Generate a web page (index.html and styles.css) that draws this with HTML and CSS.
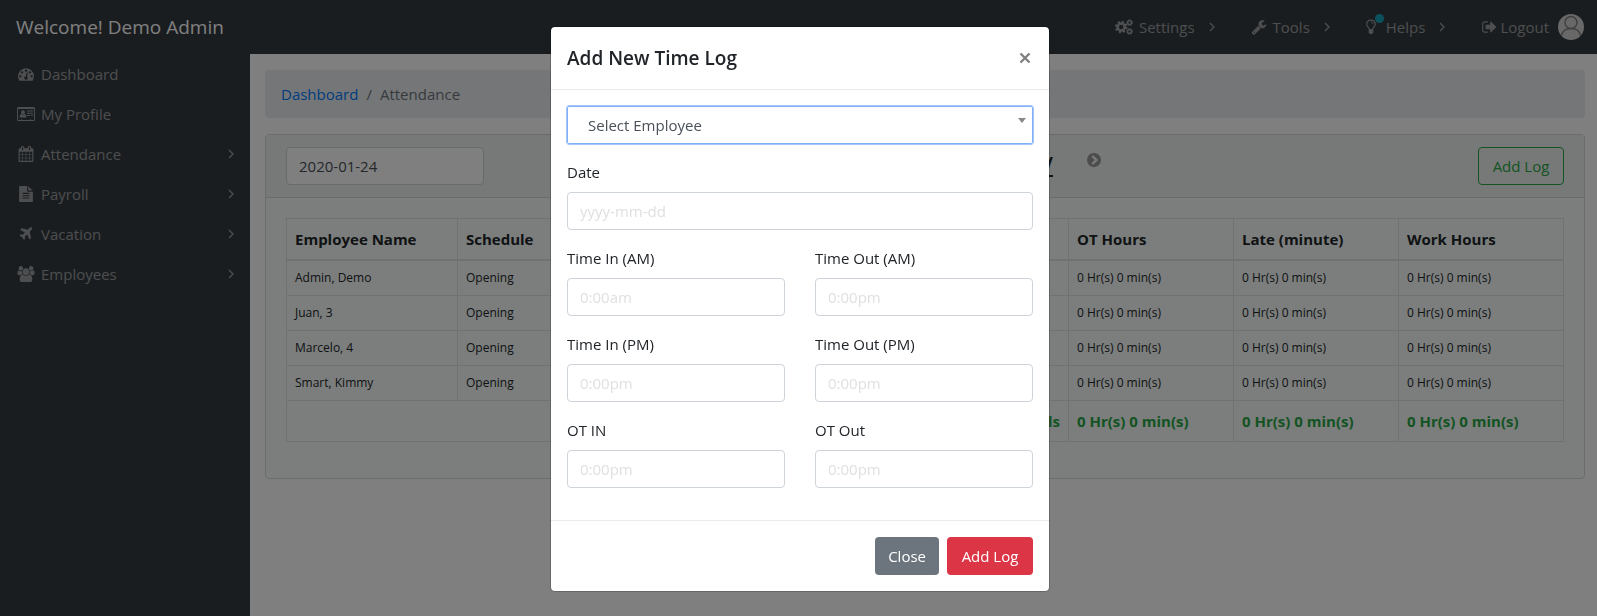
FILE: index.html
```html
<!DOCTYPE html>
<html lang="en">
<head>
<meta charset="utf-8">
<meta name="viewport" content="width=device-width, initial-scale=1">
<title>Attendance</title>
<link rel="stylesheet" href="styles.css">
</head>
<body>
<svg class="sprite" aria-hidden="true">
  <symbol id="i-angle" viewBox="0 0 6 10"><path d="M1 1l4 4-4 4" fill="none" stroke="currentColor" stroke-width="1.3"/></symbol>
  <symbol id="i-dash" viewBox="0 0 1792 1792"><path d="M384 1152q0-53-37.5-90.5t-90.5-37.5-90.5 37.5-37.5 90.5 37.5 90.5 90.5 37.5 90.5-37.5 37.5-90.5zm192-448q0-53-37.5-90.5t-90.5-37.5-90.5 37.5-37.5 90.5 37.5 90.5 90.5 37.5 90.5-37.5 37.5-90.5zm428 481l101-382q6-26-7.5-48.5t-38.5-29.5-48 6.5-30 39.5l-101 382q-60 5-107 43.5t-63 98.5q-20 77 20 146t117 89 146-20 89-117q16-60-6-117t-72-91zm660-33q0-53-37.5-90.5t-90.5-37.5-90.5 37.5-37.5 90.5 37.5 90.5 90.5 37.5 90.5-37.5 37.5-90.5zm-640-640q0-53-37.5-90.5t-90.5-37.5-90.5 37.5-37.5 90.5 37.5 90.5 90.5 37.5 90.5-37.5 37.5-90.5zm448 192q0-53-37.5-90.5t-90.5-37.5-90.5 37.5-37.5 90.5 37.5 90.5 90.5 37.5 90.5-37.5 37.5-90.5zm320 448q0 261-141 483-19 29-54 29h-1402q-35 0-54-29-141-221-141-483 0-182 71-348t191-286 286-191 348-71 348 71 286 191 191 286 71 348z"/></symbol>
  <symbol id="i-card" viewBox="0 0 18 14"><path fill-rule="evenodd" d="M1.5 0h15A1.5 1.5 0 0 1 18 1.500v11a1.500 1.500 0 0 1-1.500 1.500h-15A1.500 1.500 0 0 1 0 12.500v-11A1.500 1.500 0 0 1 1.500 0zM1 2v10.500c0 .3.200.5.500.5H4v-.8h1V13h8v-.8h1v.8h2.500c.3 0 .5-.2.500-.5V2z"/><circle cx="6" cy="5.300" r="2"/><path d="M2.600 10.500c0-2 .6-3.500 1.900-3.500.9.700 2.100.700 3 0 1.300 0 1.900 1.500 1.900 3.500z"/><path d="M10 3.500h6v1h-6zM10 5.700h6v1h-6zM10 7.900h3v1h-3zM14 7.900h2v1h-2z"/></symbol>
  <symbol id="i-cal" viewBox="0 0 1792 1792"><path d="M192 1664h288v-288h-288v288zm352 0h320v-288h-320v288zm-352-352h288v-320h-288v320zm352 0h320v-320h-320v320zm-352-384h288v-288h-288v288zm736 736h320v-288h-320v288zm-384-736h320v-288h-320v288zm768 736h288v-288h-288v288zm-384-352h320v-320h-320v320zm-352-864v-288q0-13-9.500-22.500t-22.500-9.500h-64q-13 0-22.500 9.500t-9.500 22.500v288q0 13 9.500 22.500t22.500 9.500h64q13 0 22.500-9.500t9.500-22.500zm736 864h288v-320h-288v320zm-384-384h320v-288h-320v288zm384 0h288v-288h-288v288zm32-480v-288q0-13-9.500-22.500t-22.500-9.500h-64q-13 0-22.500 9.500t-9.500 22.500v288q0 13 9.500 22.500t22.500 9.500h64q13 0 22.500-9.500t9.500-22.500zm384-64v1280q0 52-38 90t-90 38h-1408q-52 0-90-38t-38-90v-1280q0-52 38-90t90-38h128v-96q0-66 47-113t113-47h64q66 0 113 47t47 113v96h384v-96q0-66 47-113t113-47h64q66 0 113 47t47 113v96h128q52 0 90 38t38 90z"/></symbol>
  <symbol id="i-file" viewBox="0 0 1792 1792"><path d="M1596 476q14 14 28 36h-472v-472q22 14 36 28zm-476 164h544v1056q0 40-28 68t-68 28h-1344q-40 0-68-28t-28-68v-1600q0-40 28-68t68-28h800v544q0 40 28 68t68 28zm160 736v-64q0-14-9-23t-23-9h-704q-14 0-23 9t-9 23v64q0 14 9 23t23 9h704q14 0 23-9t9-23zm0-256v-64q0-14-9-23t-23-9h-704q-14 0-23 9t-9 23v64q0 14 9 23t23 9h704q14 0 23-9t9-23zm0-256v-64q0-14-9-23t-23-9h-704q-14 0-23 9t-9 23v64q0 14 9 23t23 9h704q14 0 23-9t9-23z"/></symbol>
  <symbol id="i-plane" viewBox="0 0 1792 1792"><path d="M1568 160q44 52 12 148t-108 172l-161 161 160 696q5 19-12 33l-128 96q-7 6-19 6-4 0-7-1-15-3-21-16l-279-508-259 259 53 194q5 17-8 31l-96 96q-9 9-23 9h-2q-15-2-24-13l-189-252-252-189q-11-7-13-23-1-13 9-25l96-97q9-9 23-9 6 0 8 1l194 53 259-259-508-279q-14-8-17-24-2-16 9-27l128-128q14-13 30-8l665 159 160-160q76-76 172-108t148 12z"/></symbol>
  <symbol id="i-users" viewBox="0 0 1920 1792"><path d="M593 896q-162 5-265 128h-134q-82 0-138-40.500t-56-118.500q0-353 124-353 6 0 43.500 21t97.500 42.500 119 21.500q67 0 133-23-5 37-5 66 0 159 93 293zm1071 637q0 120-73 189.500t-194 69.500h-874q-121 0-194-69.500t-73-189.500q0-53 3.500-103.500t14-109 26.500-108.500 43-97.500 62-81 85.500-53.500 111.500-20q10 0 43 21.500t73 48 107 48 135 21.500 135-21.500 107-48 73-48 43-21.500q61 0 111.500 20t85.500 53.500 62 81 43 97.500 26.500 108.500 14 109 3.500 103.500zm-1024-1277q0 106-75 181t-181 75-181-75-75-181 75-181 181-75 181 75 75 181zm704 384q0 159-112.500 271.500t-271.500 112.500-271.500-112.500-112.500-271.500 112.500-271.500 271.500-112.500 271.500 112.500 112.500 271.500zm576 225q0 78-56 118.500t-138 40.500h-134q-103-123-265-128 93-134 93-293 0-29-5-66 66 23 133 23 59 0 119-21.500t97.500-42.500 43.500-21q124 0 124 353zm-128-609q0 106-75 181t-181 75-181-75-75-181 75-181 181-75 181 75 75 181z"/></symbol>
  <symbol id="i-cogs" viewBox="0 0 18 16"><g fill="none" stroke="currentColor"><circle cx="6.200" cy="8" r="3.500" stroke-width="2.600"/><circle cx="6.200" cy="8" r="5.400" stroke-width="1.800" stroke-dasharray="2.120 2.120"/><circle cx="14.600" cy="3.600" r="1.900" stroke-width="1.400"/><circle cx="14.600" cy="3.600" r="2.900" stroke-width="1" stroke-dasharray="1.140 1.140"/><circle cx="14.600" cy="12.400" r="1.900" stroke-width="1.400"/><circle cx="14.600" cy="12.400" r="2.900" stroke-width="1" stroke-dasharray="1.140 1.140"/></g></symbol>
  <symbol id="i-wrench" viewBox="0 0 1792 1792"><path d="M448 1472q0-26-19-45t-45-19-45 19-19 45 19 45 45 19 45-19 19-45zm644-420l-682 682q-37 37-90 37-52 0-91-37l-106-108q-38-36-38-90 0-53 38-91l681-681q39 98 114.500 173.500t173.500 114.500zm634-435q0 39-23 106-47 134-164.500 217.500t-258.500 83.500q-185 0-316.500-131.500t-131.500-316.500 131.500-316.500 316.500-131.500q58 0 121.500 16.500t107.500 46.500q16 11 16 28t-16 28l-293 169v224l193 107q5-3 79-48.500t135.500-81 70.500-35.500q15 0 23.500 10t8.500 25z"/></symbol>
  <symbol id="i-bulb" viewBox="0 0 10 15"><g fill="none" stroke="currentColor" stroke-width="1.200"><path d="M3.300 10C3.200 8 .7 7.200.7 4.700a4.300 4.100 0 0 1 8.600 0C9.300 7.200 6.800 8 6.700 10z"/><path d="M5 2.700c1.200 0 2 .7 2 1.700" stroke-width=".9"/></g><path d="M2.700 10.500h4.600v2.800L6 14.500H4l-1.300-1.200z"/></symbol>
  <symbol id="i-out" viewBox="0 0 1664 1792"><path d="M704 1440q0 4 1 20t.5 26.500-3 23.500-10 19.500-20.500 6.500h-320q-119 0-203.500-84.500t-84.500-203.500v-704q0-119 84.500-203.500t203.500-84.500h320q13 0 22.500 9.500t9.500 22.500q0 4 1 20t.5 26.500-3 23.500-10 19.500-20.500 6.500h-320q-66 0-113 47t-47 113v704q0 66 47 113t113 47h312l11.500 1 11.500 3 8 5.500 7 9 2 13.500zm928-544q0 26-19 45l-544 544q-19 19-45 19t-45-19-19-45v-288h-448q-26 0-45-19t-19-45v-384q0-26 19-45t45-19h448v-288q0-26 19-45t45-19 45 19l544 544q19 19 19 45z"/></symbol>
  <symbol id="i-next" viewBox="128 128 1536 1536"><path d="M845 1395l454-454q19-19 19-45t-19-45l-454-454q-19-19-45-19t-45 19l-102 102q-19 19-19 45t19 45l307 307-307 307q-19 19-19 45t19 45l102 102q19 19 45 19t45-19zm819-499q0 209-103 385.500t-279.500 279.500-385.500 103-385.500-103-279.500-279.500-103-385.500 103-385.500 279.500-279.500 385.500-103 385.500 103 279.500 279.500 103 385.500z"/></symbol>
</svg>

<header class="topbar">
  <a class="brand" href="#">Welcome! Demo Admin</a>
  <nav class="topnav">
    <a href="#"><svg class="icon"><use href="#i-cogs"/></svg>Settings<svg class="angle"><use href="#i-angle"/></svg></a>
    <a href="#"><svg class="icon icon-sm"><use href="#i-wrench"/></svg>Tools<svg class="angle"><use href="#i-angle"/></svg></a>
    <a href="#"><span class="bulb"><svg class="icon"><use href="#i-bulb"/></svg><span class="dot"></span></span>Helps<svg class="angle"><use href="#i-angle"/></svg></a>
    <a class="logout" href="#"><svg class="icon icon-sm"><use href="#i-out"/></svg>Logout
      <svg class="avatar" viewBox="0 0 26 26"><circle cx="13" cy="13" r="13" fill="#d0d0d0"/><g fill="none" stroke="#808080" stroke-width="1.500"><circle cx="13" cy="8.500" r="6"/><path d="M3.500 21.500c1-5 5-7 9.500-7s8.500 2 9.500 7"/></g></svg></a>
  </nav>
</header>

<div class="layout">
  <nav class="sidebar">
    <a href="#"><svg class="icon"><use href="#i-dash"/></svg>Dashboard</a>
    <a href="#"><svg class="icon"><use href="#i-card"/></svg>My Profile</a>
    <a href="#"><svg class="icon"><use href="#i-cal"/></svg>Attendance<svg class="angle"><use href="#i-angle"/></svg></a>
    <a href="#"><svg class="icon"><use href="#i-file"/></svg>Payroll<svg class="angle"><use href="#i-angle"/></svg></a>
    <a href="#"><svg class="icon"><use href="#i-plane"/></svg>Vacation<svg class="angle"><use href="#i-angle"/></svg></a>
    <a href="#"><svg class="icon"><use href="#i-users"/></svg>Employees<svg class="angle"><use href="#i-angle"/></svg></a>
  </nav>

  <main class="content">
    <ol class="breadcrumb">
      <li><a href="#">Dashboard</a></li>
      <li>Attendance</li>
    </ol>
    <section class="card">
      <div class="card-header">
        <div class="day">
          <input class="control log-date" type="text" value="2020-01-24" aria-label="Log date">
          <h4>Friday</h4>
        </div>
        <div class="actions">
          <button class="next" type="button" aria-label="Next day"><svg><use href="#i-next"/></svg></button>
          <button class="btn btn-wide btn-outline" type="button">Add Log</button>
        </div>
      </div>
      <div class="card-body">
        <table class="logs">
          <colgroup><col class="c-name"><col class="c-name"><col><col class="c-hours"><col class="c-hours"><col class="c-hours"></colgroup>
          <thead>
            <tr><th>Employee Name</th><th>Schedule</th><th></th><th>OT Hours</th><th>Late (minute)</th><th>Work Hours</th></tr>
          </thead>
          <tbody>
            <tr><td>Admin, Demo</td><td>Opening</td><td></td><td>0 Hr(s) 0 min(s)</td><td>0 Hr(s) 0 min(s)</td><td>0 Hr(s) 0 min(s)</td></tr>
            <tr><td>Juan, 3</td><td>Opening</td><td></td><td>0 Hr(s) 0 min(s)</td><td>0 Hr(s) 0 min(s)</td><td>0 Hr(s) 0 min(s)</td></tr>
            <tr><td>Marcelo, 4</td><td>Opening</td><td></td><td>0 Hr(s) 0 min(s)</td><td>0 Hr(s) 0 min(s)</td><td>0 Hr(s) 0 min(s)</td></tr>
            <tr><td>Smart, Kimmy</td><td>Opening</td><td></td><td>0 Hr(s) 0 min(s)</td><td>0 Hr(s) 0 min(s)</td><td>0 Hr(s) 0 min(s)</td></tr>
          </tbody>
          <tfoot>
            <tr><th class="total" colspan="3">Totals</th><th>0 Hr(s) 0 min(s)</th><th>0 Hr(s) 0 min(s)</th><th>0 Hr(s) 0 min(s)</th></tr>
          </tfoot>
        </table>
      </div>
    </section>
  </main>
</div>

<div class="backdrop">
  <form class="modal" role="dialog" aria-labelledby="modal-title">
    <div class="modal-header">
      <h5 id="modal-title">Add New Time Log</h5>
      <button class="close" type="button" aria-label="Close dialog"><svg viewBox="0 0 12 12"><path d="M1.500 1.500l9 9M10.500 1.500l-9 9"/></svg></button>
    </div>
    <div class="modal-body">
      <div class="picker">
        <select class="control" aria-label="Employee"><option>Select Employee</option></select>
      </div>
      <div class="field wide"><label for="date">Date</label><input class="control" id="date" type="text" placeholder="yyyy-mm-dd"></div>
      <div class="field"><label for="in-am">Time In (AM)</label><input class="control" id="in-am" type="text" placeholder="0:00am"></div>
      <div class="field"><label for="out-am">Time Out (AM)</label><input class="control" id="out-am" type="text" placeholder="0:00pm"></div>
      <div class="field"><label for="in-pm">Time In (PM)</label><input class="control" id="in-pm" type="text" placeholder="0:00pm"></div>
      <div class="field"><label for="out-pm">Time Out (PM)</label><input class="control" id="out-pm" type="text" placeholder="0:00pm"></div>
      <div class="field"><label for="ot-in">OT IN</label><input class="control" id="ot-in" type="text" placeholder="0:00pm"></div>
      <div class="field"><label for="ot-out">OT Out</label><input class="control" id="ot-out" type="text" placeholder="0:00pm"></div>
    </div>
    <div class="modal-footer">
      <button class="btn btn-secondary" type="button">Close</button>
      <button class="btn btn-wide btn-danger" type="button">Add Log</button>
    </div>
  </form>
</div>
</body>
</html>
```
FILE: styles.css
```css
* { box-sizing: border-box; }
body {
  margin: 0;
  min-height: 100vh;
  display: flex;
  flex-direction: column;
  font: 15px/24px "Open Sans", "Noto Sans", sans-serif;
  color: #212529;
  background: #fff;
}
a { color: inherit; text-decoration: none; }
h4, h5 { margin: 0; }
button, input, select { font: inherit; }
svg { fill: currentColor; }
.sprite { position: absolute; width: 0; height: 0; }
.icon { width: 18px; height: 16px; flex: none; }
.icon-sm { width: 16px; }
.angle { width: 6px; height: 10px; flex: none; }

/* Top bar */
.topbar {
  height: 54px;
  display: flex;
  align-items: center;
  justify-content: space-between;
  padding: 0 13px 0 16px;
  background: #343a40;
}
.brand { font-size: 19px; color: #fff; }
.topnav { display: flex; gap: 36px; color: rgba(255, 255, 255, .5); }
.topnav a { display: flex; align-items: center; gap: 6px; }
.topnav .angle { margin-left: 8px; }
.bulb { position: relative; display: flex; padding-right: 4px; }
.bulb .icon { width: 10px; }
.dot {
  position: absolute;
  top: -5px;
  right: -4px;
  width: 9px;
  height: 9px;
  border-radius: 50%;
  background: #17a2b8;
}
.topnav .logout { gap: 3px; }
.avatar { width: 26px; height: 26px; margin-left: 6px; }

/* Page */
.layout { flex: 1; display: flex; }
.sidebar {
  width: 250px;
  flex: none;
  background: #343a40;
  color: rgba(255, 255, 255, .5);
}
.sidebar a {
  display: flex;
  align-items: center;
  gap: 6px;
  height: 40px;
  padding: 0 16px 0 17px;
}
.sidebar .angle { margin-left: auto; }
.content { flex: 1; min-width: 0; padding: 16px 12px 16px 15px; }
.breadcrumb {
  display: flex;
  list-style: none;
  margin: 0 0 16px;
  padding: 12px 16px;
  border-radius: 4px;
  background: #e9ecef;
  color: #6c757d;
}
.breadcrumb a { color: #007bff; }
.breadcrumb li + li::before { content: "/"; padding: 0 8px; }

.card { border: 1px solid #d5dbd8; border-radius: 4px; background: #f8fdfa; }
.card-header {
  display: grid;
  grid-template-columns: 3fr 2fr;
  padding: 12px 20px;
  border-bottom: 1px solid #d5dbd8;
  background: #eff3f0;
}
.day, .actions {
  display: flex;
  align-items: flex-start;
  justify-content: space-between;
}
.actions { padding-left: 34px; }
.day h4 {
  font-size: 16px;
  line-height: 24px;
  padding: 1px 0 3px;
  border-bottom: 2px solid;
}
.next { margin-top: 6px; padding: 0; border: 0; background: none; color: #999; display: flex; }
.next svg { width: 14px; height: 14px; }
.card-body { padding: 20px 20px 36px; }

.control {
  display: block;
  width: 100%;
  height: 38px;
  padding: 6px 12px;
  border: 1px solid #ced4da;
  border-radius: 4px;
  background: #fff;
  color: #495057;
}
.log-date { width: 198px; }
.control::placeholder { color: #e0e0e0; opacity: 1; }
.btn {
  height: 38px;
  padding: 0 12px;
  border: 1px solid transparent;
  border-radius: 4px;
  color: #fff;
}
.btn-wide { min-width: 86px; }
.btn-outline { border-color: #28a745; background: transparent; color: #28a745; }
.btn-secondary { background: #6c757d; }
.btn-danger { background: #dc3545; }

.logs { width: 100%; table-layout: fixed; border-collapse: collapse; }
.c-name { width: 171px; }
.c-hours { width: 165px; }
.logs th, .logs td { padding: 8px; border: 1px solid #dee2e6; text-align: left; }
.logs th { font-weight: 700; white-space: nowrap; }
.logs thead th { border-bottom-width: 2px; }
.logs td { font-size: 12px; line-height: 18px; }
.logs tfoot th { color: #28a745; }
.logs .total { text-align: right; }

/* Dialog */
.backdrop {
  position: fixed;
  inset: 0;
  display: flex;
  justify-content: center;
  align-items: flex-start;
  padding: 26px 0 0 3px;
  background: rgba(0, 0, 0, .5);
}
.modal {
  width: 100%;
  max-width: 500px;
  border: 1px solid rgba(0, 0, 0, .2);
  border-radius: 5px;
  background: #fff;
  background-clip: padding-box;
}
.modal-header {
  display: flex;
  justify-content: space-between;
  align-items: center;
  padding: 16px;
  border-bottom: 1px solid #e9ecef;
}
.modal-header h5 { font-size: 19px; line-height: 30px; font-weight: 600; }
.close { padding: 0 2px; border: 0; background: none; display: flex; }
.close svg { width: 12px; height: 12px; stroke: #808080; stroke-width: 2.400; }
.modal-body {
  display: grid;
  grid-template-columns: 1fr 1fr;
  gap: 16px 30px;
  padding: 16px 16px 32px;
}
.picker, .wide { grid-column: 1 / -1; }
.picker { position: relative; }
.picker select {
  appearance: none;
  padding: 0 20px;
  border-color: #80b0f5;
  border-radius: 2px;
  outline: 1px solid #a5c7fe;
}
.picker::after {
  content: "";
  position: absolute;
  top: 12px;
  right: 7px;
  border: 4px solid transparent;
  border-top: 5px solid #888;
  border-bottom: 0;
}
.field label { display: block; margin-bottom: 8px; }
.modal-footer {
  display: flex;
  justify-content: flex-end;
  gap: 8px;
  padding: 16px;
  border-top: 1px solid #e9ecef;
}
```
